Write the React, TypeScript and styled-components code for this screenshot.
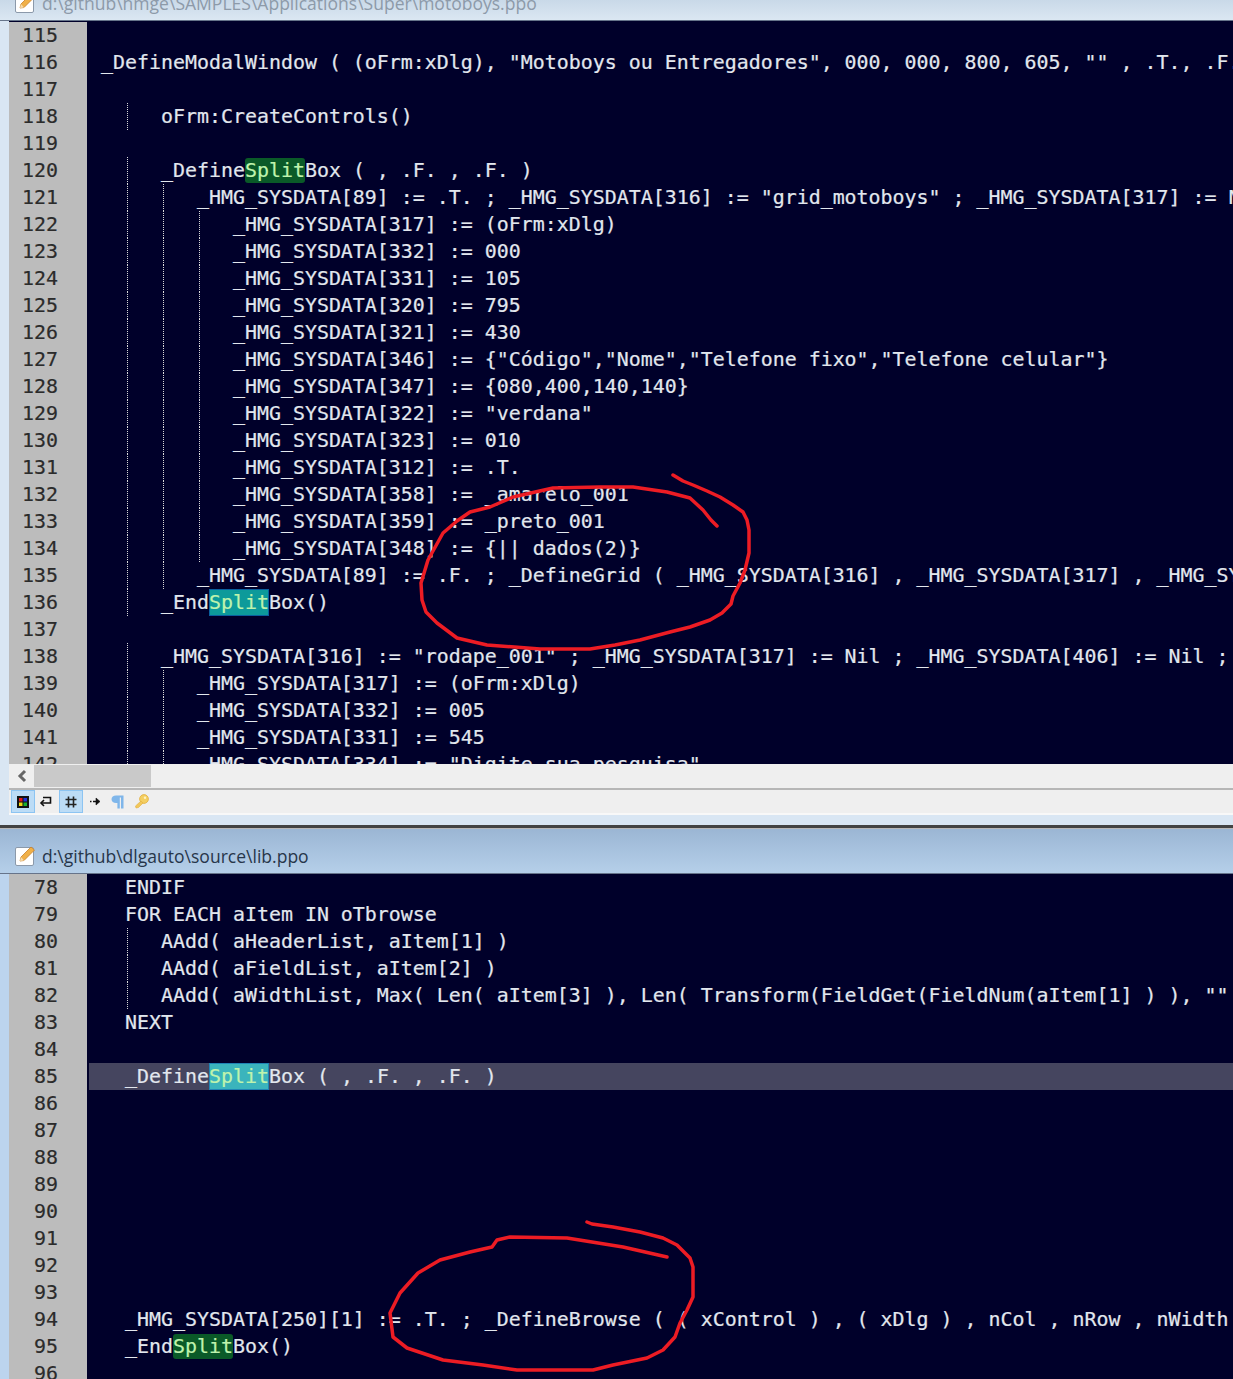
import styled, { createGlobalStyle } from "styled-components";

type Tone = "green" | "teal" | "current";

type CodeLine = {
  n: number;
  text?: string;
  guides?: number[];
  tone?: Tone;
  current?: boolean;
};

const topLines: CodeLine[] = [
  { n: 115 },
  { n: 116, text: ' _DefineModalWindow ( (oFrm:xDlg), "Motoboys ou Entregadores", 000, 000, 800, 605, "" , .T., .F., .F. )' },
  { n: 117 },
  { n: 118, text: "      oFrm:CreateControls()", guides: [3] },
  { n: 119 },
  { n: 120, text: "      _DefineSplitBox ( , .F. , .F. )", guides: [3], tone: "green" },
  { n: 121, text: '         _HMG_SYSDATA[89] := .T. ; _HMG_SYSDATA[316] := "grid_motoboys" ; _HMG_SYSDATA[317] := Nil', guides: [3, 6] },
  { n: 122, text: "            _HMG_SYSDATA[317] := (oFrm:xDlg)", guides: [3, 6, 9] },
  { n: 123, text: "            _HMG_SYSDATA[332] := 000", guides: [3, 6, 9] },
  { n: 124, text: "            _HMG_SYSDATA[331] := 105", guides: [3, 6, 9] },
  { n: 125, text: "            _HMG_SYSDATA[320] := 795", guides: [3, 6, 9] },
  { n: 126, text: "            _HMG_SYSDATA[321] := 430", guides: [3, 6, 9] },
  { n: 127, text: '            _HMG_SYSDATA[346] := {"Código","Nome","Telefone fixo","Telefone celular"}', guides: [3, 6, 9] },
  { n: 128, text: "            _HMG_SYSDATA[347] := {080,400,140,140}", guides: [3, 6, 9] },
  { n: 129, text: '            _HMG_SYSDATA[322] := "verdana"', guides: [3, 6, 9] },
  { n: 130, text: "            _HMG_SYSDATA[323] := 010", guides: [3, 6, 9] },
  { n: 131, text: "            _HMG_SYSDATA[312] := .T.", guides: [3, 6, 9] },
  { n: 132, text: "            _HMG_SYSDATA[358] := _amarelo_001", guides: [3, 6, 9] },
  { n: 133, text: "            _HMG_SYSDATA[359] := _preto_001", guides: [3, 6, 9] },
  { n: 134, text: "            _HMG_SYSDATA[348] := {|| dados(2)}", guides: [3, 6, 9] },
  { n: 135, text: "         _HMG_SYSDATA[89] := .F. ; _DefineGrid ( _HMG_SYSDATA[316] , _HMG_SYSDATA[317] , _HMG_SYSDATA[332]", guides: [3, 6] },
  { n: 136, text: "      _EndSplitBox()", guides: [3], tone: "teal" },
  { n: 137 },
  { n: 138, text: '      _HMG_SYSDATA[316] := "rodape_001" ; _HMG_SYSDATA[317] := Nil ; _HMG_SYSDATA[406] := Nil ;', guides: [3] },
  { n: 139, text: "         _HMG_SYSDATA[317] := (oFrm:xDlg)", guides: [3, 6] },
  { n: 140, text: "         _HMG_SYSDATA[332] := 005", guides: [3, 6] },
  { n: 141, text: "         _HMG_SYSDATA[331] := 545", guides: [3, 6] },
  { n: 142, text: '         _HMG_SYSDATA[334] := "Digite sua pesquisa"', guides: [3, 6] },
];

const bottomLines: CodeLine[] = [
  { n: 78, text: "   ENDIF" },
  { n: 79, text: "   FOR EACH aItem IN oTbrowse" },
  { n: 80, text: "      AAdd( aHeaderList, aItem[1] )", guides: [3] },
  { n: 81, text: "      AAdd( aFieldList, aItem[2] )", guides: [3] },
  { n: 82, text: '      AAdd( aWidthList, Max( Len( aItem[3] ), Len( Transform(FieldGet(FieldNum(aItem[1] ) ), "" ) ) ) )', guides: [3] },
  { n: 83, text: "   NEXT" },
  { n: 84 },
  { n: 85, text: "   _DefineSplitBox ( , .F. , .F. )", tone: "current", current: true },
  { n: 86 },
  { n: 87 },
  { n: 88 },
  { n: 89 },
  { n: 90 },
  { n: 91 },
  { n: 92 },
  { n: 93 },
  { n: 94, text: "   _HMG_SYSDATA[250][1] := .T. ; _DefineBrowse ( ( xControl ) , ( xDlg ) , nCol , nRow , nWidth ," },
  { n: 95, text: "   _EndSplitBox()", tone: "green" },
  { n: 96 },
];

const circleOne =
  "M673 475 L683 481 L693 485 L707 491 L720 497 L733 505 L743 512 L747 520 L749 530 L749 553 L745 570 L740 583 L733 596 L731 604 L722 613 L710 620 L690 627 L670 632 L640 640 L615 645 L590 649 L540 649 L487 645 L457 638 L437 623 L426 612 L422 600 L421 583 L428 560 L443 533 L457 521 L470 512 L490 507 L513 497 L553 488 L600 487 L633 487 L667 492 L690 498 L703 510 L711 520 L717 526";

const circleTwo =
  "M587 1222 L592 1224 L613 1227 L640 1232 L663 1238 L677 1245 L690 1258 L693 1267 L693 1297 L687 1310 L680 1323 L675 1337 L663 1350 L647 1358 L613 1365 L593 1370 L517 1370 L483 1365 L443 1360 L407 1348 L393 1337 L390 1313 L400 1293 L418 1273 L440 1260 L470 1252 L492 1247 L497 1240 L510 1237 L567 1238 L623 1247 L645 1252 L667 1257";

const NoteIcon = () => (
  <svg width="22" height="22" viewBox="0 0 22 22">
    <rect x="1.5" y="2.5" width="18" height="18" rx="1.5" fill="#fff" stroke="#8b99aa" />
    <path d="M6 16 L7 12 L17 2 L20.5 5 L10 15.5 Z" fill="#f0b048" stroke="#c8802a" strokeWidth="0.8" />
    <path d="M6 16 L7 12 L10 15.5 Z" fill="#f6dcae" />
  </svg>
);

const ColorsIcon = () => (
  <svg width="12" height="12" viewBox="0 0 12 12">
    <rect width="12" height="12" fill="#111" />
    <rect x="2" y="2" width="3.5" height="3.5" fill="#e01818" />
    <rect x="6.5" y="2" width="3.5" height="3.5" fill="#2030d8" />
    <rect x="2" y="6.5" width="3.5" height="3.5" fill="#f0d810" />
    <rect x="6.5" y="6.5" width="3.5" height="3.5" fill="#18b030" />
  </svg>
);

const WrapIcon = () => (
  <svg width="13" height="12" viewBox="0 0 13 12" fill="none" stroke="#111" strokeWidth="1.6">
    <path d="M4 1.5 H11.5 V7 H2" />
    <path d="M5 4 L2 7 L5 10" />
  </svg>
);

const HashIcon = () => (
  <svg width="12" height="12" viewBox="0 0 12 12" fill="none" stroke="#222" strokeWidth="1.6">
    <path d="M3.5 0.5 V11.5 M8.5 0.5 V11.5 M0.5 3.5 H11.5 M0.5 8.5 H11.5" />
  </svg>
);

const ArrowIcon = () => (
  <svg width="11" height="9" viewBox="0 0 11 9" fill="none" stroke="#111">
    <path d="M0 4.5 H1.5 M3 4.5 H7" strokeWidth="1.4" />
    <path d="M6 1 L10 4.5 L6 8 Z" fill="#111" strokeWidth="0.6" />
  </svg>
);

const PilcrowIcon = () => (
  <svg width="13" height="14" viewBox="0 0 13 14">
    <path d="M5 0.5 H12.5 V13.5 H10 V2.5 H8.8 V13.5 H6.4 V8 H5 C2.4 8 0.5 6.4 0.5 4.2 C0.5 2 2.4 0.5 5 0.5 Z" fill="#7fb6ea" />
  </svg>
);

const KeyIcon = () => (
  <svg width="15" height="15" viewBox="0 0 15 15">
    <circle cx="10" cy="5" r="4.4" fill="#f4cf62" stroke="#e2ae3c" strokeWidth="0.8" />
    <path d="M7 7 L1.5 12 L2 14 L4.5 13.5 L9 9 Z" fill="#f2c85a" stroke="#e2ae3c" strokeWidth="0.6" />
    <circle cx="11" cy="3.8" r="1.2" fill="#fff2c0" />
  </svg>
);

const renderText = ({ text, tone }: CodeLine) => {
  if (!text) return null;
  if (!tone) return text;
  const [before, after] = text.split("Split");
  return (
    <>
      {before}
      <Match $tone={tone}>Split</Match>
      {after}
    </>
  );
};

const Rows = ({ lines }: { lines: CodeLine[] }) => (
  <>
    {lines.map((line) => (
      <Row key={line.n}>
        <LineNumber>{line.n}</LineNumber>
        <Code $current={line.current}>
          {line.guides?.map((col) => (
            <Guide key={col} $col={col} />
          ))}
          {renderText(line)}
        </Code>
      </Row>
    ))}
  </>
);

export default function App() {
  return (
    <Page>
      <GlobalStyle />
      <TopPane>
        <TopTitle>
          <NoteIcon />
          <TitleText $active={false}>d:\github\hmge\SAMPLES\Applications\Super\motoboys.ppo</TitleText>
        </TopTitle>
        <TopEditor>
          <Rows lines={topLines} />
        </TopEditor>
        <ScrollBar>
          <ScrollArrow>
            <svg width="12" height="14" viewBox="0 0 12 14" fill="none" stroke="#666" strokeWidth="3">
              <path d="M9 2 L4 7 L9 12" />
            </svg>
          </ScrollArrow>
          <ScrollThumb />
        </ScrollBar>
        <Toolbar>
          <ToolButton $on><ColorsIcon /></ToolButton>
          <ToolButton $nudge={3}><WrapIcon /></ToolButton>
          <ToolButton $on><HashIcon /></ToolButton>
          <ToolButton><ArrowIcon /></ToolButton>
          <ToolButton $nudge={4}><PilcrowIcon /></ToolButton>
          <ToolButton $nudge={4}><KeyIcon /></ToolButton>
        </Toolbar>
      </TopPane>
      <Splitter />
      <BottomPane>
        <BottomTitle>
          <NoteIcon />
          <TitleText $active>d:\github\dlgauto\source\lib.ppo</TitleText>
        </BottomTitle>
        <BottomEditor>
          <Rows lines={bottomLines} />
        </BottomEditor>
      </BottomPane>
      <Scribble viewBox="0 0 1233 1379">
        <path d={circleOne} />
        <path d={circleTwo} />
      </Scribble>
    </Page>
  );
}

const GlobalStyle = createGlobalStyle`
  html, body {
    margin: 0;
    padding: 0;
    background: #d9e6f3;
  }
`;

const Page = styled.div`
  position: relative;
  width: 1233px;
  height: 1379px;
  overflow: hidden;
  display: flex;
  flex-direction: column;
`;

const TopPane = styled.section`
  display: flex;
  flex-direction: column;
  height: 825px;
  background: #d9e6f3;
`;

const BottomPane = styled.section`
  display: flex;
  flex-direction: column;
  flex: 1;
  min-height: 0;
  background: #bcd4ee;
`;

const TopTitle = styled.header`
  display: flex;
  align-items: flex-end;
  flex: none;
  gap: 6px;
  height: 21px;
  padding: 0 0 6px 14px;
  box-sizing: border-box;
  overflow: hidden;
  border-bottom: 1px solid #66748a;
  background: linear-gradient(#c9d9e8, #dbe7f2);
`;

const BottomTitle = styled.header`
  display: flex;
  align-items: flex-end;
  flex: none;
  gap: 6px;
  height: 45px;
  padding: 0 0 6px 14px;
  box-sizing: border-box;
  border-bottom: 1px solid #66748a;
  background: linear-gradient(#9bb6d4, #b5cfe9);
`;

const TitleText = styled.span<{ $active: boolean }>`
  margin-bottom: -1px;
  font-family: "Open Sans", "Noto Sans", sans-serif;
  font-size: 17.55px;
  line-height: 24px;
  white-space: nowrap;
  color: ${(p) => (p.$active ? "#27364a" : "#8d9aa9")};
`;

const TopEditor = styled.div`
  flex: none;
  height: 743px;
  margin-left: 9px;
  padding-top: 1px;
  box-sizing: border-box;
  overflow: hidden;
  background: #00002a;
`;

const BottomEditor = styled.div`
  flex: 1;
  min-height: 0;
  margin-left: 9px;
  overflow: hidden;
  background: #00002a;
`;

const Row = styled.div`
  display: flex;
  height: 27px;
  font-family: "DejaVu Sans Mono", "Liberation Mono", monospace;
  font-size: 19.93px;
  line-height: 27px;
  -webkit-text-stroke: 0.2px;
`;

const LineNumber = styled.div`
  flex: none;
  width: 78px;
  padding-right: 29px;
  box-sizing: border-box;
  text-align: right;
  color: #2b2b2b;
  background: #bcbcbc;
`;

const Code = styled.div<{ $current?: boolean }>`
  position: relative;
  flex: 1;
  min-width: 0;
  margin-left: 2px;
  white-space: pre;
  color: #e2e7ee;
  background: ${(p) => (p.$current ? "#45455f" : "transparent")};
`;

const Guide = styled.i<{ $col: number }>`
  position: absolute;
  top: 0;
  bottom: 0;
  left: ${(p) => p.$col * 12 + 2}px;
  border-left: 1px dotted #d8d8d8;
`;

const toneStyles: Record<Tone, string> = {
  green: "height: 25px; margin-top: 1px; border-radius: 3px; background: #0a5a28;",
  teal: "height: 27px; box-shadow: inset 0 0 0 1px #0a5f9e; background: #0d9a9a;",
  current: "height: 27px; box-shadow: inset 0 0 0 1px #1f84b4; background: #3bb4bc;",
};

const Match = styled.span<{ $tone: Tone }>`
  display: inline-block;
  vertical-align: top;
  line-height: ${(p) => (p.$tone === "green" ? "25px" : "27px")};
  color: #bff3ad;
  ${(p) => toneStyles[p.$tone]}
`;

const ScrollBar = styled.div`
  display: flex;
  flex: none;
  align-items: stretch;
  height: 26px;
  margin-left: 9px;
  padding: 1px 0;
  box-sizing: border-box;
  border-bottom: 2px solid #b6b6b6;
  background: #efefef;
`;

const ScrollArrow = styled.div`
  display: flex;
  flex: none;
  width: 25px;
  align-items: center;
  justify-content: center;
`;

const ScrollThumb = styled.div`
  flex: none;
  width: 117px;
  background: #c9c9c9;
`;

const Toolbar = styled.div`
  display: flex;
  flex: none;
  height: 25px;
  margin-left: 9px;
  padding: 0 0 2px 2px;
  box-sizing: border-box;
  border-bottom: 2px solid #f8f8f8;
  background: #efefef;
`;

const ToolButton = styled.div<{ $on?: boolean; $nudge?: number }>`
  display: flex;
  flex: none;
  width: 24px;
  height: 23px;
  box-sizing: border-box;
  align-items: center;
  justify-content: center;
  padding-right: ${(p) => p.$nudge ?? 0}px;
  border: 1px solid ${(p) => (p.$on ? "#8cc4f2" : "transparent")};
  background: ${(p) => (p.$on ? "#bcdcf6" : "transparent")};
`;

const Splitter = styled.div`
  flex: none;
  height: 4px;
  border-bottom: 1px solid #b8b8b8;
  box-sizing: border-box;
  background: #434343;
`;

const Scribble = styled.svg`
  position: absolute;
  inset: 0;
  width: 1233px;
  height: 1379px;
  pointer-events: none;
  fill: none;
  stroke: #ed1c24;
  stroke-width: 3.5;
  stroke-linejoin: round;
  stroke-linecap: round;
`;
